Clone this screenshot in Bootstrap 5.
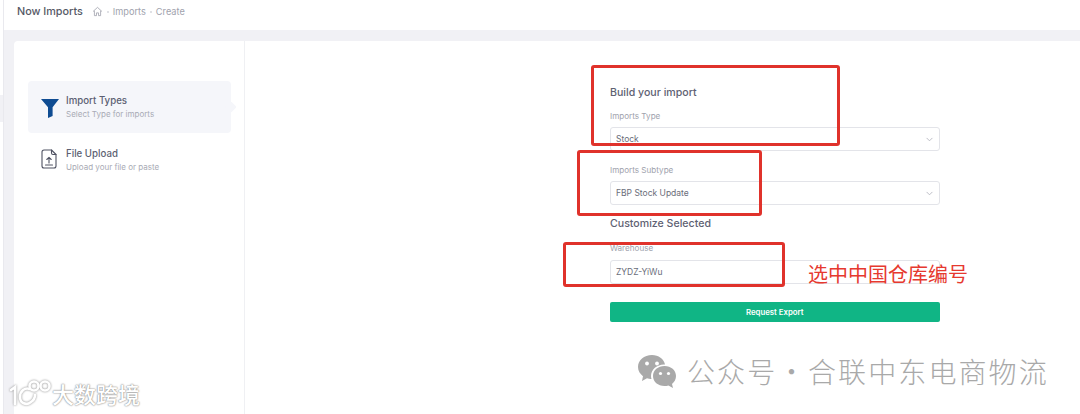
<!DOCTYPE html>
<html lang="en">

<head>
    <meta charset="UTF-8">
    <meta name="viewport" content="width=device-width, initial-scale=1.0">
    <title>Now Imports</title>
    <link rel="stylesheet" href="https://cdn.jsdelivr.net/npm/bootstrap@5.3.0/dist/css/bootstrap.min.css">
    <script src="https://cdn.jsdelivr.net/npm/bootstrap@5.3.0/dist/js/bootstrap.bundle.min.js"></script>
    <style>
        html, body { height: 414px; overflow: hidden; }
        body { font-family: "Inter", "Noto Sans CJK SC", sans-serif; background: #fff; color: #4a4d5e; }
        .shell { height: 414px; position: relative; }
        .rail { width: 4px; border-right: 1px solid #e9e9ee; position: relative; flex: none; }
        .rail-tab { position: absolute; left: 0; top: 95px; width: 3px; height: 27px; background: #f1f1f5; }
        .top-bar { height: 30px; padding: 0 0 6px 13px; gap: 9px; }
        .page-title { font-size: 10.8px; font-weight: 500; color: #565966; }
        .crumbs { font-size: 9.2px; color: #a0a2ad; gap: 3px; }
        .crumbs i { width: 2px; height: 2px; border-radius: 50%; background: #d6d7dc; margin: 0 1px; }
        .page-bg { background: #f1f1f5; padding: 11px 0 0 10px; flex: 1; min-height: 0; }
        .panel { background: #fff; height: 100%; border-radius: 4px 0 0 0; }
        .steps-col { width: 231px; border-right: 1px solid #eff0f3; padding: 40px 13px 0 14px; flex: none; }
        .step { height: 52px; padding-left: 12px; gap: 6px; border-radius: 4px; position: relative; }
        .step-on { background: #f5f6fa; margin-bottom: 1px; }
        .step-on::after { content: ""; position: absolute; right: -4px; top: 22px; width: 8px; height: 8px; background: #f5f6fa; transform: rotate(45deg); border-radius: 1px; }
        .step-ico { width: 20px; flex: none; padding-left: 1px; }
        .step-ico-up { margin-top: -6px; }
        .step-name { font-size: 9.7px; font-weight: 500; color: #5c5f72; line-height: 13px; }
        .step-hint { font-size: 8px; color: #a9abb5; line-height: 14px; }
        .form-col { padding: 45px 0 0 365px; width: 695px; }
        .form-box { width: 329.5px; }
        .form-head { font-size: 10.6px; font-weight: 500; color: #5e6172; line-height: 14px; }
        .field-label { font-size: 8.1px; color: #a0a2ad; line-height: 12px; margin: 13px 0 5px; }
        .label-first { margin-top: 10px; }
        .head-second { margin-top: 12px; }
        .label-ware { margin-top: 11px; margin-bottom: 6px; }
        .form-select.pick, .form-control.pick { height: 24px; font-size: 8.5px; color: #6a6d7a; padding: 0 5px; border-color: #e3e4e9; border-radius: 3px; min-height: 0; line-height: 22px; background-size: 9px 7px; background-position: right 5px center; }
        .form-select.pick { --bs-form-select-bg-img: url("data:image/svg+xml,%3csvg xmlns='http://www.w3.org/2000/svg' viewBox='0 0 16 16'%3e%3cpath fill='none' stroke='%23b5b6bf' stroke-linecap='round' stroke-linejoin='round' stroke-width='2' d='m2 5 6 6 6-6'/%3e%3c/svg%3e"); }
        .go-btn { height: 20px; margin-top: 18px; background: #10b585; border: 0; color: #fff; font-size: 7.8px; font-weight: 600; padding: 0; border-radius: 2px; line-height: 20px; }
        .go-btn:hover { background: #10b585; color: #fff; }
        .mark-box { position: absolute; border: 3px solid #e0322b; border-radius: 3px; pointer-events: none; }
        .mark-a { left: 591px; top: 65px; width: 249px; height: 81px; }
        .mark-b { left: 577px; top: 150px; width: 185px; height: 66px; }
        .mark-c { left: 563px; top: 242px; width: 222px; height: 45px; }
        .note-cn { position: absolute; left: 808px; top: 261px; font-size: 20px; line-height: 26px; color: #e6392f; font-family: "Noto Sans CJK SC", sans-serif; }
        .wx-mark { position: absolute; left: 637px; top: 351px; gap: 10px; color: #a9a9a9; font-size: 28px; line-height: 40px; letter-spacing: 2.1px; word-spacing: -8px; font-family: "Noto Sans CJK SC", sans-serif; font-weight: 300; }
        .cb-mark { position: absolute; left: 8px; top: 379px; color: #fff; font-size: 22px; line-height: 28px; font-family: "Noto Sans CJK SC", sans-serif; font-weight: 500; text-shadow: 0 0 2px #8a8a8a, 0 0 1px #8a8a8a; }
        .cb-logo { filter: drop-shadow(0 0 1px #8a8a8a); }
    </style>
</head>

<body>
    <div class="shell d-flex">
        <div class="rail"><div class="rail-tab"></div></div>
        <div class="flex-grow-1 d-flex flex-column">
            <div class="top-bar d-flex align-items-center">
                <span class="page-title">Now Imports</span>
                <span class="crumbs d-flex align-items-center">
                    <svg width="11" height="11" viewBox="0 0 16 16" fill="none" stroke="#9a9ca8" stroke-width="1.1" stroke-linejoin="round"><path d="M1.500 8 8 2l6.500 6"/><path d="M3.500 7v7h3v-4h3v4h3V7"/></svg>
                    <i></i><span>Imports</span><i></i><span>Create</span>
                </span>
            </div>
            <div class="page-bg">
                <div class="panel d-flex">
                    <div class="steps-col">
                        <div class="step step-on d-flex align-items-center">
                            <div class="step-ico">
                                <svg width="18" height="19" viewBox="0 0 18 19"><path d="M0 0h18l-6.400 8.300V17l-4.600 2V8.300z" fill="#0f4c92"/></svg>
                            </div>
                            <div>
                                <div class="step-name">Import Types</div>
                                <div class="step-hint">Select Type for imports</div>
                            </div>
                        </div>
                        <div class="step d-flex align-items-center">
                            <div class="step-ico step-ico-up">
                                <svg width="17" height="20" viewBox="0 0 17 20" fill="none" stroke="#4f5262" stroke-width="1.100" stroke-linejoin="round" stroke-linecap="round"><path d="M10.500 1H3a2 2 0 0 0-2 2v14a2 2 0 0 0 2 2h10a2 2 0 0 0 2-2V5.500z"/><path d="M10.500 1v3a1.500 1.500 0 0 0 1.500 1.500h3"/><path d="M8 14V8.500M5.800 10.500 8 8.300l2.200 2.200M4.500 16h7"/></svg>
                            </div>
                            <div>
                                <div class="step-name">File Upload</div>
                                <div class="step-hint">Upload your file or paste</div>
                            </div>
                        </div>
                    </div>
                    <div class="form-col">
                        <div class="form-box">
                            <div class="form-head">Build your import</div>
                            <div class="field-label label-first">Imports Type</div>
                            <select class="form-select pick"><option>Stock</option></select>
                            <div class="field-label">Imports Subtype</div>
                            <select class="form-select pick"><option>FBP Stock Update</option></select>
                            <div class="form-head head-second">Customize Selected</div>
                            <div class="field-label label-ware">Warehouse</div>
                            <input class="form-control pick" value="ZYDZ-YiWu">
                            <button class="btn go-btn w-100">Request Export</button>
                        </div>
                    </div>
                </div>
            </div>
        </div>

        <!-- annotations on top of the screenshot -->
        <div class="mark-box mark-a"></div>
        <div class="mark-box mark-b"></div>
        <div class="mark-box mark-c"></div>
        <div class="note-cn">选中中国仓库编号</div>
        <div class="wx-mark d-flex align-items-center">
            <svg width="40" height="34" viewBox="0 0 40 34" fill="#a9a9a9">
                <path d="M15 1C7 1 1 6.300 1 13c0 3.700 2 7 5 9.200L5 27l5-2.700c1.200.4 3 .7 4.500.7-.3-1-.5-2-.5-3 0-6.500 6-11.500 13-11.500h1C27 5 21.500 1 15 1z"/>
                <path d="M27.500 12C21 12 16 16.300 16 22s5 10 11.500 10c1.400 0 2.700-.2 3.900-.6L36 34l-1-4c2.500-2 4-4.800 4-8 0-5.700-5-10-11.500-10z"/>
                <g fill="#fff"><circle cx="10" cy="9.500" r="1.900"/><circle cx="20" cy="9.500" r="1.900"/><circle cx="23.500" cy="19.500" r="1.600"/><circle cx="31.500" cy="19.500" r="1.600"/></g>
            </svg>
            <span>公众号 · 合联中东电商物流</span>
        </div>
        <div class="cb-mark d-flex align-items-center">
            <svg class="cb-logo" width="44" height="28" viewBox="0 0 44 28" fill="none" stroke="#fff" stroke-width="2.600" stroke-linecap="round">
                <path d="M3 11l4-3v17M22 10c-5-2-10 2-10 8 0 6 6 9 11 5 3-2 4-5 4-7"/>
                <circle cx="26" cy="7" r="4.500"/><circle cx="37" cy="7" r="4.500"/>
            </svg>
            <span>大数跨境</span>
        </div>
    </div>
</body>

</html>
